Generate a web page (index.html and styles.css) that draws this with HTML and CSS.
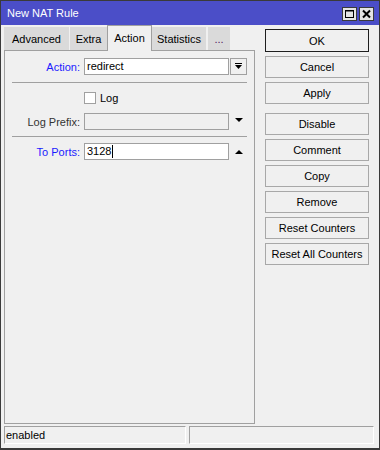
FILE: index.html
```html
<!DOCTYPE html>
<html lang="en">
<head>
  <meta charset="UTF-8" />
  <title>New NAT Rule</title>
  <link rel="stylesheet" href="styles.css">
</head>
<body>
  <div class="window">
    <div class="titlebar">
      <span class="title">New NAT Rule</span>
      <div class="title-buttons">
        <span class="tbtn">
          <svg width="13" height="12" viewBox="0 0 13 12"><rect x="2.5" y="2.5" width="8" height="7" fill="none" stroke="#000" stroke-width="1"/><line x1="2.5" y1="3" x2="10.5" y2="3" stroke="#000" stroke-width="1"/></svg>
        </span>
        <span class="tbtn">
          <svg width="13" height="12" viewBox="0 0 13 12"><path d="M3 2.5 L10 9.5 M10 2.5 L3 9.5" stroke="#000" stroke-width="2"/></svg>
        </span>
      </div>
    </div>

    <div class="main">
      <div class="left">
        <div class="tabs">
          <div class="tab tab-advanced">Advanced</div>
          <div class="tab tab-extra">Extra</div>
          <div class="tab tab-action active">Action</div>
          <div class="tab tab-stats">Statistics</div>
          <div class="tab tab-more">...</div>
        </div>
        <div class="panel">
          <div class="row">
            <span class="lbl lbl-link">Action:</span>
            <div class="field">redirect</div>
            <span class="dd-btn">
              <svg width="15" height="15" viewBox="0 0 15 15"><rect x="4" y="4" width="7" height="1" fill="#000"/><polygon points="4,6 11,6 7.5,10" fill="#000"/></svg>
            </span>
          </div>
          <div class="sep sep-first"></div>
          <div class="row row-check">
            <span class="checkbox"></span>
            <span class="check-text">Log</span>
          </div>
          <div class="row row-prefix">
            <span class="lbl">Log Prefix:</span>
            <div class="field disabled"></div>
            <span class="arrow">
              <svg width="17" height="17" viewBox="0 0 17 17"><polygon points="5,5 13,5 9,9" fill="#000"/></svg>
            </span>
          </div>
          <div class="sep"></div>
          <div class="row">
            <span class="lbl lbl-link">To Ports:</span>
            <div class="field">3128<span class="caret"></span></div>
            <span class="arrow">
              <svg width="17" height="17" viewBox="0 0 17 17"><polygon points="5,11 13,11 9,7" fill="#000"/></svg>
            </span>
          </div>
        </div>
      </div>

      <div class="actions">
        <button class="btn btn-default">OK</button>
        <button class="btn">Cancel</button>
        <button class="btn">Apply</button>
        <button class="btn btn-group">Disable</button>
        <button class="btn">Comment</button>
        <button class="btn">Copy</button>
        <button class="btn">Remove</button>
        <button class="btn">Reset Counters</button>
        <button class="btn">Reset All Counters</button>
      </div>
    </div>

    <div class="statusbar">
      <div class="status-cell status-left">enabled</div>
      <div class="status-cell status-right"></div>
    </div>
  </div>
</body>
</html>
```

FILE: styles.css
```css
* { box-sizing: border-box; margin: 0; padding: 0; }
html, body { width: 380px; height: 450px; background: #f0f0f0; font-family: 'Liberation Sans', Arial, sans-serif; font-size: 11px; color: #000; }

.window { width: 380px; height: 450px; border: 1px solid #3a3a3a; border-bottom-width: 2px; display: flex; flex-direction: column; background: #f0f0f0; }

.titlebar { height: 24px; background: #4b4ec8; display: flex; align-items: center; justify-content: space-between; padding: 0 5px 0 6px; }
.title { color: #fff; font-size: 11px; }
.title-buttons { display: flex; gap: 2px; padding-top: 1px; }
.tbtn { width: 15px; height: 14px; background: #e4e4e4; border: 1px solid #3a3a3a; display: flex; align-items: center; justify-content: center; }

.main { flex: 1; display: flex; gap: 10px; padding: 1px 9px 0 3px; }
.left { width: 251px; display: flex; flex-direction: column; }

.tabs { height: 25px; display: flex; align-items: flex-end; gap: 1px; position: relative; z-index: 1; margin-bottom: -1px; }
.tab { height: 23px; background: #dadada; display: flex; align-items: center; justify-content: center; margin-bottom: 1px; }
.tab.active { height: 26px; margin-bottom: 0; background: #f0f0f0; border: 1px solid #a0a0a0; border-bottom: none; padding-bottom: 2px; }
.tab-advanced { width: 65px; }
.tab-extra { width: 37px; }
.tab-action { width: 45px; margin-left: -1px; }
.tab-stats { width: 54px; margin-left: -1px; }
.tab-more { width: 22px; margin-left: 1px; color: #502060; }

.panel { flex: 1; border: 1px solid #a0a0a0; padding-top: 7px; }

.row { display: flex; align-items: center; height: 17px; }
.lbl { width: 75px; text-align: right; margin-right: 4px; color: #333; }
.lbl-link { color: #1a1aff; }
.field { width: 145px; height: 17px; border: 1px solid #a0a0a0; background: #fff; padding: 0 2px; line-height: 15px; display: flex; align-items: center; }
.field.disabled { background: #f0f0f0; }
.caret { width: 1px; height: 13px; background: #000; margin-left: 1px; }
.dd-btn { width: 17px; height: 17px; margin-left: 1px; border: 1px solid #a0a0a0; display: flex; align-items: center; justify-content: center; }
.arrow { width: 17px; height: 17px; margin-left: 1px; display: flex; }

.sep { height: 1px; background: #a0a0a0; margin: 6px 7px 6px 7px; }
.sep-first { margin-top: 7px; margin-bottom: 9px; }

.row-check { height: 12px; padding-left: 79px; }
.checkbox { width: 12px; height: 12px; border: 1px solid #a0a0a0; background: #fff; }
.check-text { margin-left: 4px; }
.row-prefix { margin-top: 9px; }

.actions { width: 104px; display: flex; flex-direction: column; gap: 4px; padding-top: 3px; }
.btn { height: 22px; background: #f0f0f0; border: 1px solid #a8a8a8; font-family: 'Liberation Sans', Arial, sans-serif; font-size: 11px; color: #000; }
.btn-default { height: 23px; border-color: #1e1e1e; }
.btn-group { margin-top: 5px; }

.statusbar { height: 24px; display: flex; gap: 3px; padding: 2px 5px 4px 3px; }
.status-cell { height: 18px; border: 1px solid; border-color: #a0a0a0 #fff #fff #a0a0a0; padding-left: 1px; line-height: 16px; }
.status-left { width: 182px; }
.status-right { flex: 1; }
```
